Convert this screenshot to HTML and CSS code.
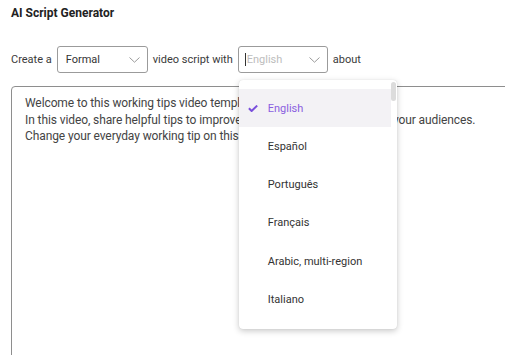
FILE: index.html
```html
<!DOCTYPE html>
<html>
<head>
<meta charset="utf-8">
<link rel="stylesheet" href="styles.css">
</head>
<body>
<div class="page">
  <h1 class="title">AI Script Generator</h1>
  <div class="row">
    <span class="label">Create a</span>
    <div class="select select-formal">
      <span class="value">Formal</span>
      <svg class="chev" width="11" height="6" viewBox="0 0 11 6"><path d="M0.5 0.5 L5.5 5.2 L10.5 0.5" fill="none" stroke="#9a9a9a" stroke-width="1"/></svg>
    </div>
    <span class="label">video script with</span>
    <div class="select select-lang">
      <span class="caret"></span>
      <span class="placeholder">English</span>
      <svg class="chev" width="11" height="6" viewBox="0 0 11 6"><path d="M0.5 0.5 L5.5 5.2 L10.5 0.5" fill="none" stroke="#9a9a9a" stroke-width="1"/></svg>
      <div class="dropdown">
        <ul class="options">
          <li class="option selected">
            <svg class="check" width="10" height="7" viewBox="0 0 10 7"><path d="M0.9 3.3 L3.6 6 L9.2 0.6" fill="none" stroke="#7a4fdc" stroke-width="2"/></svg>
            <span>English</span>
          </li>
          <li class="option"><span>Español</span></li>
          <li class="option"><span>Português</span></li>
          <li class="option"><span>Français</span></li>
          <li class="option"><span>Arabic, multi-region</span></li>
          <li class="option"><span>Italiano</span></li>
        </ul>
        <div class="scrollbar"><div class="thumb"></div></div>
      </div>
    </div>
    <span class="label">about</span>
  </div>
  <div class="textbox">
    <p>Welcome to this working tips video template.</p>
    <p>In this video, share helpful tips to improve your working efficiency with your audiences.</p>
    <p>Change your everyday working tip on this template.</p>
  </div>
</div>
</body>
</html>
```

FILE: styles.css
```css
html, body {
  margin: 0;
  padding: 0;
  overflow: hidden;
  background: #ffffff;
}
body {
  font-family: Roboto, "Liberation Sans", sans-serif;
  color: #333333;
}
.page {
  padding: 5px 0 0 11px;
  width: 560px;
}
.title {
  margin: 0;
  font-size: 12px;
  line-height: 16px;
  font-weight: 700;
  color: #222222;
}
.row {
  margin-top: 25px;
  display: flex;
  align-items: center;
  gap: 5px;
  height: 27px;
}
.label {
  font-size: 11px;
  color: #3a3a3a;
}
.select {
  position: relative;
  box-sizing: border-box;
  height: 27px;
  border: 1px solid #9b9b9b;
  border-radius: 3px;
  display: flex;
  align-items: center;
  font-size: 11px;
}
.select-formal {
  width: 91px;
  padding-left: 8px;
}
.select-lang {
  width: 90px;
  padding-left: 6px;
}
.value {
  color: #333333;
  flex: 1;
}
.caret {
  width: 1px;
  height: 13px;
  background: #333333;
  margin-right: 1px;
}
.placeholder {
  color: #bdbdbd;
  flex: 1;
}
.chev {
  margin-right: 7px;
}
.dropdown {
  position: absolute;
  top: 33px;
  left: 0;
  width: 158px;
  height: 249px;
  box-sizing: border-box;
  background: #ffffff;
  border-radius: 4px;
  box-shadow: 0 2px 6px rgba(0, 0, 0, 0.22), 0 0 1px rgba(0, 0, 0, 0.15);
  display: flex;
  z-index: 5;
}
.options {
  list-style: none;
  margin: 0;
  padding: 9px 0 0 0;
  flex: 1;
}
.option {
  height: 38.25px;
  display: flex;
  align-items: center;
  padding-left: 29px;
  font-size: 11px;
  color: #333333;
  position: relative;
}
.option.selected {
  background: #f3f2f5;
  color: #8a5fe0;
}
.check {
  position: absolute;
  left: 9px;
  top: 16px;
}
.scrollbar {
  width: 6px;
  padding-top: 2px;
}
.thumb {
  width: 5px;
  height: 19px;
  background: #dcdcdc;
  border-radius: 3px;
}
.textbox {
  margin-top: 13px;
  width: 540px;
  height: 300px;
  box-sizing: border-box;
  border: 1px solid #8e8e8e;
  border-radius: 4px;
  padding: 8px 13px;
  font-size: 12px;
  line-height: 16.5px;
  letter-spacing: -0.1px;
  color: #444444;
}
.textbox p {
  margin: 0;
  white-space: nowrap;
}
```
